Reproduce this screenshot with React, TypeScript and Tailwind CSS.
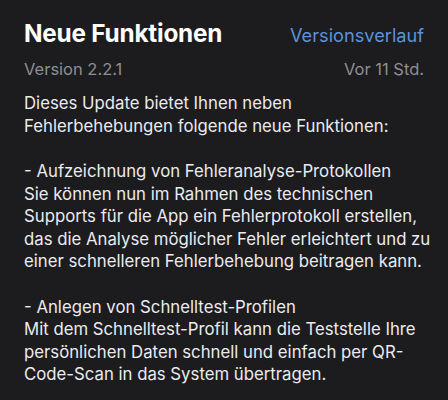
import React from 'react';

const paragraphs: string[][] = [
  ['Dieses Update bietet Ihnen neben', 'Fehlerbehebungen folgende neue Funktionen:'],
  [
    '- Aufzeichnung von Fehleranalyse-Protokollen',
    'Sie können nun im Rahmen des technischen',
    'Supports für die App ein Fehlerprotokoll erstellen,',
    'das die Analyse möglicher Fehler erleichtert und zu',
    'einer schnelleren Fehlerbehebung beitragen kann.',
  ],
  [
    '- Anlegen von Schnelltest-Profilen',
    'Mit dem Schnelltest-Profil kann die Teststelle Ihre',
    'persönlichen Daten schnell und einfach per QR-',
    'Code-Scan in das System übertragen.',
  ],
];

const App: React.FC = () => {
  return (
    <div className="w-[448px] h-[400px] bg-[#1c1c1e] px-6 overflow-hidden" style={{ fontFamily: 'Inter, "Noto Sans", sans-serif' }}>
      <div className="flex items-baseline justify-between pt-[15px]">
        <h1 className="text-[24.3px] font-bold text-white tracking-[-0.2px]">Neue Funktionen</h1>
        <span className="text-[18.2px] text-[#5e92d8]">Versionsverlauf</span>
      </div>
      <div className="flex justify-between mt-[6px] text-[16.5px] text-[#8e8e93]">
        <span>Version 2.2.1</span>
        <span>Vor 11 Std.</span>
      </div>
      <div className="mt-[10px] flex flex-col gap-[22.6px] text-[16.75px] leading-[22.6px] text-[#ebebf0]">
        {paragraphs.map((lines, i) => (
          <p key={i}>
            {lines.map((l, j) => (
              <span key={j} className="block whitespace-nowrap">{l}</span>
            ))}
          </p>
        ))}
      </div>
    </div>
  );
};

export default App;
